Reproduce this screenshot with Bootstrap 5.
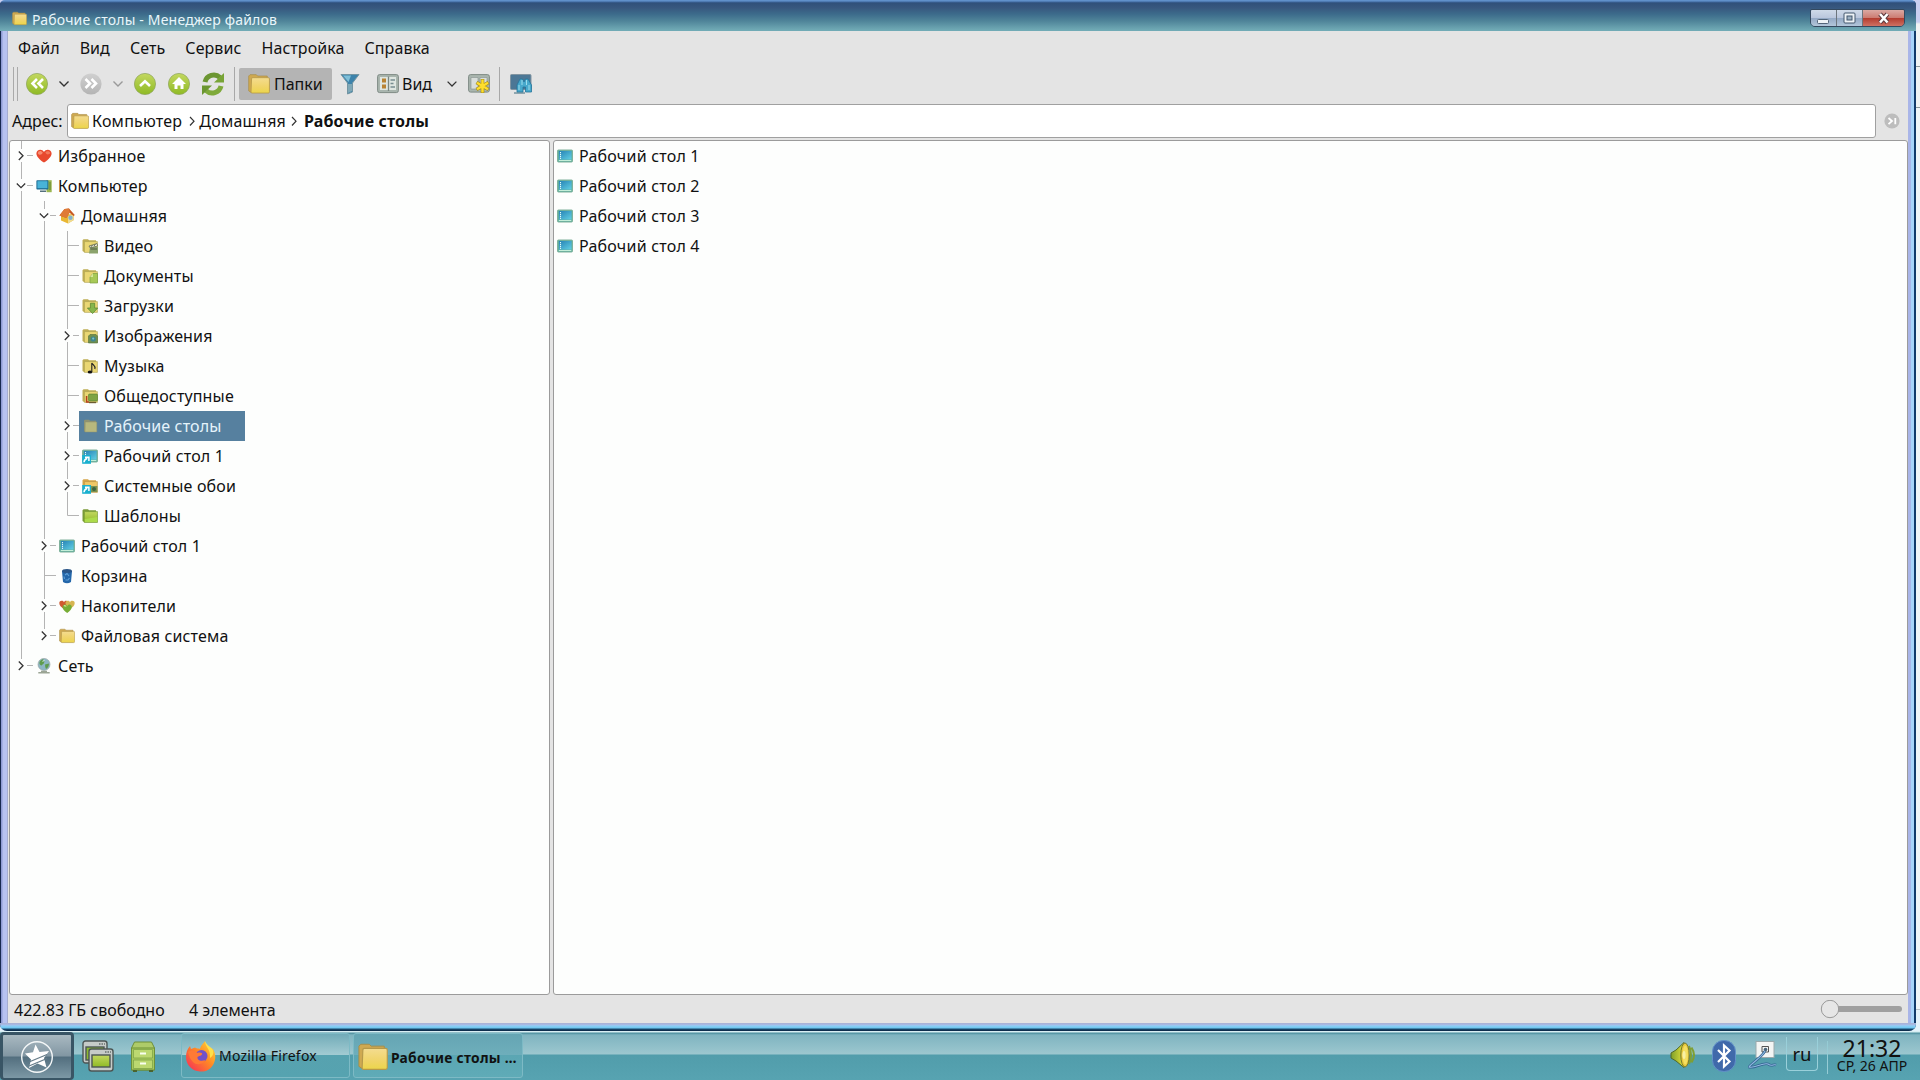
<!DOCTYPE html>
<html lang="ru">
<head>
<meta charset="utf-8">
<title>Менеджер файлов</title>
<link href="https://cdn.jsdelivr.net/npm/bootstrap@5.3.0/dist/css/bootstrap.min.css" rel="stylesheet">
<style>
html,body{height:100%}
body{width:1920px;height:1080px;overflow:hidden;background:linear-gradient(#c9cff0 0 22px,#f0f3f4 24px 66px,#8d979c 66px 67px,#f0f3f4 67px 107px,#8d979c 107px 108px,#f0f5f8 108px 1009px,#b9c2c8 1009px 1010px,#e4f2fb 1010px);font-family:"Noto Sans",sans-serif;font-size:16px;line-height:20px;color:#111}
svg{display:block;flex:none}
.win{width:1916px;height:1031px;border-radius:5px 5px 7px 7px;background:linear-gradient(90deg,#17284f 0 1px,#8f9cd4 1px 2px,#b7c2f0 3px 7px,#a5add0 7px 8px,transparent 8px 1908px,#a9b5e8 1908px 1911px,#a8d4fa 1911px 1914px,#123a6b 1914px);position:relative;z-index:1;overflow:hidden}
.titlebar{height:31px;background:linear-gradient(#6090ca 0 1px,#3d659b 2px,#30507a 3px,#38587f 8px,#3c6b8b 14px,#4f8499 21px,#70aab5 30px);color:#e9f6fb;font-size:14px;letter-spacing:.18px;padding:2px 11px 0 12px}
.winbody{margin:0 8px;width:1900px;height:992px;background:#e4e4e4}
.winfoot{height:8px;background:linear-gradient(#a9b3d8 0 1px,#a5c0ee 2px,#8bcff5 3px,#6ec6f0 5px,#1a4c72 6px,#0a2440 8px)}
.menurow{height:34px;padding:0 10px;gap:20px;letter-spacing:.08px}
.toolrow{height:37px;padding-left:5px}
.addrrow{height:37px;padding-left:4px}
.handle{width:5px;height:34px;border-left:1px solid #aaa;border-right:1px solid #aaa}
.vsep{width:1px;height:34px;background:#a8a8a8}
.tbtn{height:32px;width:93px;background:#b4b4b4;border-radius:2px;padding-left:9px;gap:4px}
.addr{width:1809px;height:34px;background:#fff;border:1px solid #a0a0a0;border-radius:3px;padding-left:3px;letter-spacing:.22px}
.addr b{letter-spacing:.14px}
.panes{padding:1px 0 0 1px}
.pane{background:#fdfefd;border:1px solid #9b9b9b;border-radius:3px;height:855px}
.lpane{width:541px}.rpane{width:1355px}
.trow{height:30px;letter-spacing:.15px}
.tlabel{height:30px;padding:0 0 0 3px;gap:6px;white-space:nowrap}
.tsel{background:#56809f;color:#e4f3fb;width:166px}
.frow{height:30px;padding-left:3px;gap:6px;letter-spacing:.2px}
.wbtns{width:95px;height:18px;margin-top:2px;border:1px solid #34495f;border-radius:2px 2px 5px 5px;overflow:hidden}
.wb{height:16px;background:linear-gradient(#cfdae8,#b9c6dc 50%,#93a8c4 50%,#b3c6da)}
.wclose{background:linear-gradient(#dba9a3,#cc7a70 50%,#b23a2d 50%,#cf7163)}
.taskbar{height:49px;width:1920px;background:linear-gradient(#d8eef3 0 1px,#4b8f9d 2px,#7fb4c0 4px,#9cc7cf 23px,#519dab 24px,#57a3b1 48px)}
.startbtn{width:74px;height:48px;margin-top:1px;border:3px solid #395565;border-bottom-width:2px;border-radius:4px;background:linear-gradient(#a9b9c1,#8297a3 48%,#536f7f 52%,#7c98a5)}
.task{height:45px;border:1px solid #7dbac5;border-radius:3px;white-space:nowrap}
.task1{width:169px;padding-left:3px;gap:3px;font-size:14px;letter-spacing:.22px;background:linear-gradient(#71abb8,#a2cbd2 48%,#57a2af 50%,#56a3b0)}
.task2{width:170px;padding:2px 0 0 4px;gap:3px;font-size:13.8px;font-weight:700;letter-spacing:.28px;background:linear-gradient(#65a5b3,#6eaebb 48%,#5ba6b3 50%,#5fabb7)}
.lang{width:32px;height:34px;border:1px solid #9ad0da;border-top:0;border-radius:0 0 4px 4px;font-size:18.500px;line-height:33px;text-align:center}
.clk{width:86px;text-align:center;line-height:1;white-space:nowrap}
.clk1{font-size:23px;line-height:24px}.clk2{font-size:14px;line-height:12px}
</style>
<script src="https://cdn.jsdelivr.net/npm/bootstrap@5.3.0/dist/js/bootstrap.bundle.min.js"></script>
</head>
<body>
<svg width="0" height="0" style="position:absolute">
<defs>
<linearGradient id="yel" x2="0" y2="1"><stop offset="0" stop-color="#f4dc90"/><stop offset=".6" stop-color="#f0d468"/><stop offset="1" stop-color="#ecd64a"/></linearGradient>
<linearGradient id="grn" x2="0" y2="1"><stop offset="0" stop-color="#c3d860"/><stop offset="1" stop-color="#8fba24"/></linearGradient>
<linearGradient id="gry" x2="0" y2="1"><stop offset="0" stop-color="#d0d0d0"/><stop offset="1" stop-color="#b4b4b4"/></linearGradient>
<linearGradient id="blu" x2="1" y2="1"><stop offset="0" stop-color="#2580b4"/><stop offset="1" stop-color="#62d0e4"/></linearGradient>
<linearGradient id="fx" x1="1" x2="0" y2="1"><stop offset="0" stop-color="#ffe23c"/><stop offset=".45" stop-color="#ff8a24"/><stop offset="1" stop-color="#f5265e"/></linearGradient>
<linearGradient id="spk"><stop offset="0" stop-color="#7fa02a"/><stop offset="1" stop-color="#e2e23c"/></linearGradient>
<symbol id="folder" viewBox="0 0 16 16"><path d="M.5 2.2 1.5 1.2H6L7 2.2H14V14H2L.5 13Z" fill="#cfa951" stroke="#a98d45" stroke-width=".5"/><path d="M2.6 4.2Q2.6 3.4 3.4 3.4H14.8Q15.6 3.4 15.6 4.2V13.6Q15.6 14.6 14.8 14.6H2.9Q2.2 14.6 2.2 13.8Z" fill="url(#yel)" stroke="#b6994a" stroke-width=".6"/></symbol>
<symbol id="fback" viewBox="0 0 16 16"><path d="M.5 2.2 1.5 1.2H6L7 2.2H14V14H2L.5 13Z" fill="#bfae55"/><path d="M2.4 3.6H15.4V14.4H2.4Z" fill="#ead774" stroke="#a99d50" stroke-width=".6"/></symbol>
<symbol id="video" viewBox="0 0 16 16"><use href="#fback"/><path d="M8 9H16V15.5H7Z" fill="#8ba36c"/><path d="M7 8 15 5.5 15.8 8 8 9.8Z" fill="#ecefdc" stroke="#555c44" stroke-width=".7"/><path d="M9 8.8 10.5 7M12 8 13.4 6M8.5 11H15" stroke="#4c523c" stroke-width=".9"/></symbol>
<symbol id="docs" viewBox="0 0 16 16"><use href="#fback"/><path d="M11 5.5H15.6V15H8V9Z" fill="#a7c957" stroke="#7b9d42" stroke-width=".7"/><path d="M11 5.5V9H8Z" fill="#d7e79c"/></symbol>
<symbol id="down" viewBox="0 0 16 16"><use href="#fback"/><path d="M8.4 5.2H12.7V10H15.7L10.6 15.6 5.4 10H8.4Z" fill="#86b64c" stroke="#55822c" stroke-width=".7"/></symbol>
<symbol id="pics" viewBox="0 0 16 16"><use href="#fback"/><path d="M6.5 8 8 6.5H14L15.5 8V15H6.5Z" fill="#6f8f51" stroke="#526f3a" stroke-width=".6"/><circle cx="11.2" cy="11" r="2.6" fill="#3d8590"/><circle cx="11.2" cy="10.6" r="1.1" fill="#7ec4bf"/></symbol>
<symbol id="music" viewBox="0 0 16 16"><use href="#fback"/><ellipse cx="8" cy="14" rx="2.3" ry="1.6" fill="#111"/><path d="M9.8 14V5C11 7.5 14 7.5 12.8 11" fill="none" stroke="#222" stroke-width="1.1"/></symbol>
<symbol id="public" viewBox="0 0 16 16"><use href="#fback"/><path d="M4.6 8V14H7" stroke="#b5411d" stroke-width="1.5" fill="none"/><rect x="6.500" y="6" width="9" height="7" rx="1" fill="#7da343" stroke="#587d2d" stroke-width=".6"/><path d="M7 14.500H14" stroke="#6b5b30" stroke-width="1.4"/></symbol>
<symbol id="fsel" viewBox="0 0 16 16"><path d="M2 2.5 3 1.8H7L8 2.8H14V14H3L2 13Z" fill="#8f9371"/><path d="M3.2 4H14.8V14H3Z" fill="#b8b87d" stroke="#8d9270" stroke-width=".5"/></symbol>
<symbol id="tmpl" viewBox="0 0 16 16"><path d="M.5 2.2 1.5 1.2H6L7 2.2H14V14H2L.5 13Z" fill="#7b9b38"/><path d="M2.4 3.6H15.5V14.4H2.2Z" fill="url(#grn)" stroke="#6f9430" stroke-width=".6"/><path d="M2.8 11 15.2 9V14H2.8Z" fill="#acdb4a"/></symbol>
<symbol id="desk" viewBox="0 0 16 16"><rect x=".5" y="2" width="15" height="12" rx=".8" fill="#5fae9f" stroke="#80b29c"/><rect x="2" y="3" width="12.500" height="8.600" fill="url(#blu)"/><path d="M3.500 4V11" stroke="#e3faf8" stroke-width="1.100" stroke-dasharray="1.200 .8"/><path d="M1.800 12.500H14.300" stroke="#c4eed8" stroke-width="1"/></symbol>
<symbol id="lnk" viewBox="0 0 16 16"><rect x=".2" y="7" width="8.8" height="8.8" fill="#1ab0cf"/><path d="M2 14.3Q2 11.5 5.3 10.2M3 9.3H6.9V13" fill="none" stroke="#fff" stroke-width="1.5"/></symbol>
<symbol id="desklnk" viewBox="0 0 16 16"><use href="#desk"/><use href="#lnk"/></symbol>
<symbol id="wall" viewBox="0 0 16 16"><path d="M.5 2.2 1.5 1.2H6L7 2.2H14V14H2L.5 13Z" fill="#d5a54a"/><path d="M2.4 3.6H15.4V14.4H2.4Z" fill="#f0c766" stroke="#b58f42" stroke-width=".6"/><rect x="8" y="8" width="7.4" height="6" fill="#7c9250"/><circle cx="12" cy="11" r="2" fill="#3b6340"/><use href="#lnk"/></symbol>
<symbol id="heart" viewBox="0 0 16 16"><path d="M8 14.6C3 11 .4 8.2.4 5.4.4 1.4 6 .2 8 4 10 .2 15.6 1.4 15.6 5.4 15.6 8.2 13 11 8 14.6Z" fill="#e8492e"/><path d="M1.8 5.2C2 2.6 5.4 2.2 6.8 4.8 5.6 7 3 7.5 1.8 5.2Z" fill="#f78c72"/><path d="M9.3 4.6C10.4 2.6 13.6 2.6 14.3 5 12.8 7 10.6 7 9.3 4.6Z" fill="#f27a5c"/></symbol>
<symbol id="comp" viewBox="0 0 16 16"><rect x="10.5" y="2.2" width="5.2" height="12" fill="#9ab650"/><path d="M14 4V12" stroke="#5f8331"/><rect x=".4" y="2.2" width="12" height="9.3" rx=".8" fill="#1c6a92"/><rect x="1.4" y="3.2" width="10" height="7" fill="#48b3d8"/><path d="M4 12.5H10V14H4Z" fill="#54707d"/></symbol>
<symbol id="home" viewBox="0 0 16 16"><path d="M2 7V12.5L9 15.6 14.8 12V6Z" fill="#e9b733"/><path d="M9 8.5 14.8 6V12L9 15.6Z" fill="#efdc91"/><path d="M.4 7.5 5.5 1 10 .6 15.8 7 14.6 8 10.5 4.8 7.4 10Z" fill="#c85a24"/><path d="M5.5 1 10 .6 10.8 4.2 7.4 10 .4 7.5Z" fill="#df7b36"/><circle cx="11.5" cy="9.8" r="2.2" fill="#83b2cc"/></symbol>
<symbol id="bin" viewBox="0 0 16 16"><path d="M3 3 4 14Q8 16.5 12 14L13 3Z" fill="#2467aa"/><ellipse cx="8" cy="3" rx="5" ry="2" fill="#2a5587"/><path d="M6 7 8 5.5 10 8M10.5 10 9 12H6.5M5.5 11 5 8.5" fill="none" stroke="#5f9fd6" stroke-width="1.2"/></symbol>
<symbol id="drives" viewBox="0 0 16 16"><path d="M5 11C2 9 .3 7.5.3 5 .3 2.500 4 2 5 4.300 6 2 9.500 2.500 9.500 5 9.500 7.500 8 9 5 11Z" fill="#cf5a30"/><path d="M11 11C8 9 6.500 7.500 6.500 5 6.500 2.500 10 2 11 4.300 12 2 15.700 2.500 15.700 5 15.700 7.500 14 9 11 11Z" fill="#d6b552"/><path d="M8.200 15C5.200 13 3.500 11 3.500 9 3.500 6.200 7.200 5.600 8.200 8.200 9.200 5.600 12.800 6.200 12.800 9 12.800 11 11 13 8.200 15Z" fill="#77ad35"/><path d="M5 8.200Q6 7 7.200 8.500" stroke="#cfe8a2" stroke-width="1.100" fill="none"/></symbol>
<symbol id="net" viewBox="0 0 16 16"><circle cx="8" cy="6.4" r="6" fill="#8db6c4" stroke="#9aa8a8" stroke-width=".7"/><path d="M3.5 4Q6 0 8 2 9 5 6.5 6.5 5 8.5 3.5 6ZM9 6.5 13 5.5Q13 9 10 11Q9 9 9 6.5Z" fill="#5f9c4e"/><path d="M6.5 3.3 8.5 2.4" stroke="#e6f4f8"/><path d="M5 13.4H11M2.3 14.8H13.7" stroke="#9ba595" stroke-width="1.5"/></symbol>
<symbol id="chr" viewBox="0 0 10 12"><path d="M3 2 7 6.200 3 10.500" fill="none" stroke="#333" stroke-width="1.200"/></symbol>
<symbol id="chd" viewBox="0 0 12 10"><path d="M1.6 2.6 6 7 10.4 2.6" fill="none" stroke="currentColor" stroke-width="1.3"/></symbol>
</defs></svg>

<div class="d-flex flex-column">
<div class="win">
  <div class="titlebar d-flex align-items-center">
    <svg width="15" height="15" style="margin-top:3px"><use href="#folder"/></svg>
    <span class="flex-grow-1" style="margin-left:5px;padding-top:6px">Рабочие столы - Менеджер файлов</span>
    <div class="wbtns d-flex">
      <svg class="wb" width="25" height="16"><rect x="6.500" y="9.500" width="11" height="4" rx="1" fill="#edf2f6" stroke="#526479"/></svg>
      <svg class="wb border-start border-secondary" width="26" height="16"><rect x="7" y="3" width="11" height="10" rx="1" fill="#edf2f6" stroke="#42566d"/><rect x="10" y="6" width="5" height="4" fill="#9cb0c2" stroke="#42566d"/></svg>
      <svg class="wb wclose border-start border-secondary" width="42" height="16"><path d="M17 4 24.500 12.500M24.500 4 17 12.500" stroke="#5c3a3e" stroke-width="4.600"/><path d="M17 4 24.500 12.500M24.500 4 17 12.500" stroke="#fff" stroke-width="2.600"/></svg>
    </div>
  </div>
  <div class="winbody d-flex flex-column">
    <div class="menurow d-flex align-items-center"><span>Файл</span><span>Вид</span><span>Сеть</span><span>Сервис</span><span>Настройка</span><span>Справка</span></div>
    <div class="toolrow d-flex align-items-center">
      <div class="handle"></div>
      <svg width="216" height="36"><g stroke="#8da45a" stroke-width=".7"><circle cx="19" cy="18" r="10.6" fill="url(#grn)"/><circle cx="127" cy="18" r="10.6" fill="url(#grn)"/><circle cx="161" cy="18" r="10.6" fill="url(#grn)"/></g><circle cx="73" cy="18" r="10.6" fill="url(#gry)"/>
        <g fill="none" stroke="#fff" stroke-width="2.6"><path d="M19 13 14.5 17.5 19 22M25 13 20.5 17.5 25 22"/><path d="M67.500 13 72 17.500 67.500 22M73.500 13 78 17.500 73.500 22"/><path d="M122 20 127 15.200 132 20"/></g>
        <path d="M161 11 168 18H165.500V23H162.500V19.500H159.500V23H156.500V18H154Z" fill="#fff"/>
        <path d="M41.500 15.500 46 20 50.500 15.500" fill="none" stroke="#333" stroke-width="1.4"/><path d="M95.500 15.500 100 20 104.500 15.500" fill="none" stroke="#999" stroke-width="1.400"/>
        <path d="M187 16A9 9 0 0 1 202 11.500" fill="none" stroke="#6c9632" stroke-width="5"/><path d="M196 16.500H206V7Z" fill="#78a436"/><path d="M203 20A9 9 0 0 1 188 24.500" fill="none" stroke="#7faa3a" stroke-width="5"/><path d="M194 19.500H184V29Z" fill="#6b9630"/></svg>
      <div class="vsep"></div>
      <div class="tbtn d-flex align-items-center ms-1"><svg width="22" height="22"><use href="#folder"/></svg><span>Папки</span></div>
      <svg class="ms-2" width="20" height="22"><path d="M1 1.500H19L12.500 10V19L7.500 21V10Z" fill="#3d83ab" stroke="#7395a2"/><path d="M3 2.500H11L8.500 9Z" fill="#7fbfd8"/><path d="M8 11H12V18L8 20Z" fill="#7fa8b7"/></svg>
      <svg width="22" height="22" style="margin-left:17px"><rect x=".6" y="1.600" width="20.800" height="18" rx="2" fill="#a9b5ae" stroke="#7f8b85"/><rect x="3" y="4" width="16" height="13" fill="#dfe6e1"/><path d="M11.500 3.500V18" stroke="#7a8781" stroke-width="1.300"/><path d="M5 5.500H9V9.500H5ZM5 11.500H9V15.500H5Z" fill="#b98334"/><path d="M13.500 7H18M13.500 10.500H16.500M13.500 14H18" stroke="#788d91" stroke-width="1.300"/></svg>
      <span style="margin-left:3px">Вид</span>
      <svg width="12" height="10" style="margin-left:14px;color:#333"><use href="#chd"/></svg>
      <svg width="24" height="24" style="margin-left:10px"><rect x=".6" y="2.600" width="20.800" height="17.500" rx="2" fill="#a9b5ae" stroke="#7f8b85"/><path d="M3 5.500H10V17H3ZM12 5.500H19V17H12Z" fill="#d9dedb" stroke="#87928d" stroke-width=".6"/><path d="M14.500 7V21M8.500 10.500 20.500 17.500M20.500 10.500 8.500 17.500" stroke="#a38b18" stroke-width="3.600"/><path d="M14.500 7.600V20.400M9 10.800 20 17.200M20 10.800 9 17.200" stroke="#ffdf2c" stroke-width="2.400"/></svg>
      <div class="vsep" style="margin-left:7px"></div>
      <svg width="23" height="24" style="margin-left:10px"><rect x=".5" y="2.500" width="20.500" height="15" rx="1" fill="#4c7795" stroke="#8194a0"/><path d="M4 20H15V22H4Z" fill="#8ea6b0"/><path d="M7 20V13L10 7H12.500L14 10 15.500 7H18L21.500 13V20H15.500V15H13V20Z" fill="#48a9cc" stroke="#25739b" stroke-width=".8"/><path d="M9 13V18M19 13V18M12 8V13M16.500 8V13" stroke="#9dddec" stroke-width="1"/></svg>
    </div>
    <div class="addrrow d-flex align-items-center">
      <span style="width:55px">Адрес:</span>
      <div class="addr d-flex align-items-center"><svg width="18" height="18"><use href="#folder"/></svg><span style="margin-left:3px">Компьютер</span><svg width="10" height="12" style="margin:0 2px 0 5px"><use href="#chr"/></svg><span>Домашняя</span><svg width="10" height="12" style="margin:0 5px 0 3px"><use href="#chr"/></svg><b>Рабочие столы</b></div>
      <svg width="16" height="16" style="margin-left:8px"><circle cx="8" cy="8" r="7.600" fill="#bdbdbd"/><path d="M4.500 5 8 8 4.500 11.200M11.300 5V11.200" fill="none" stroke="#fff" stroke-width="1.800"/></svg>
    </div>
    <div class="panes d-flex justify-content-between">
      <div class="pane lpane" id="tree"></div>
      <div class="pane rpane" id="files"></div>
    </div>
    <div class="d-flex align-items-center flex-grow-1" style="padding:2px 4px 0 6px">
      <span style="width:175px">422.83 ГБ свободно</span><span class="flex-grow-1">4 элемента</span>
      <svg width="84" height="20"><rect x="14" y="6" width="68" height="6" rx="3" fill="#a0a0a0"/><circle cx="10" cy="9" r="8.700" fill="#e6e6e6" stroke="#999"/></svg>
    </div>
  </div>
  <div class="winfoot"></div>
</div>

<div class="taskbar d-flex align-items-start">
  <div class="startbtn d-flex justify-content-center align-items-center">
    <svg width="34" height="34"><circle cx="17" cy="17" r="15.300" fill="none" stroke="#f4f7f8" stroke-width="1.400"/><path d="M15.500 4.500 19.500 12 29 11 24 18 26.500 27.500 17.500 23.500 9 28 11 19.500 5 13.500 13 12.300Z" fill="#fff"/><path d="M9 22 27 14.500M9 26 27 18.500" stroke="#647b88" stroke-width="1.300"/></svg>
  </div>
  <svg width="32" height="33" style="margin:9px 0 0 8px"><g stroke="#4c5655" stroke-width="1.400"><rect x="1" y="1" width="24" height="22" rx="2.500" fill="#c6cbc8"/><rect x="4" y="7" width="18" height="13" fill="#8dba30"/><rect x="7" y="9" width="24" height="22" rx="2.500" fill="#c6cbc8"/><rect x="10" y="15" width="18" height="12" fill="url(#grn)"/></g><path d="M17 4H23M23 12H29" stroke="#68716e" stroke-width="1.500" stroke-dasharray="1.500 1"/></svg>
  <svg width="26" height="32" style="margin:10px 0 0 16px"><path d="M1.500 7 4.500 1H21.500L24.500 7V29H1.500Z" fill="#aecb69" stroke="#6d8f39"/><path d="M1.500 7H24.500V29H1.500Z" fill="#a7c95c" stroke="#6d8f39"/><path d="M3.500 8.500H22.500V17H3.500ZM3.500 19H22.500V27.500H3.500Z" fill="#bcd870" stroke="#82a548" stroke-width=".8"/><path d="M10 12.500H16M10 22.500H16" stroke="#fafff0" stroke-width="2"/><path d="M3 30H7M19 30H23" stroke="#4b642e" stroke-width="2"/></svg>
  <div class="task task1 d-flex align-items-center" style="margin:2px 0 0 25px">
    <svg width="31" height="32"><path d="M20 1C20 4 23 5 25 8L28 9C31 14 31 20 28 25 25 30 20 32 15 31.500 7 31 1 25 1 17 1 13 2 9 5 6L6 9 10 7.500C12 9 14 8 15 9 16 5 18 4 20 1Z" fill="url(#fx)"/><ellipse cx="16.500" cy="16" rx="6" ry="6" fill="#7350c8"/><path d="M3 12C7 9 11 11 12 13 15 12 18 13 17 14.500 16 16 13 16 12.500 17 12 20 16 22 20 20 19 24 12 26 8 22 5 19 4 16 3 12Z" fill="#ff7a35"/><path d="M20 1C20 7 26 9 25 18 30 15 29 9 25 7 22 5 21 3 20 1Z" fill="#ffe04a"/></svg>
    <span>Mozilla Firefox</span>
  </div>
  <div class="task task2 d-flex align-items-center" style="margin:2px 0 0 3px"><svg width="30" height="30"><use href="#folder"/></svg><span style="padding-top:2px">Рабочие столы …</span></div>
  <div class="ms-auto d-flex align-items-start">
    <svg width="26" height="28" style="margin-top:10px"><path d="M19 5Q23 14 19 23M21.500 6.500Q26.500 14 21.500 21.500" fill="none" stroke="#7f9f34" stroke-width="2"/><path d="M1 12 6 9 14 1.500V26.500L6 20 1 17Z" fill="url(#spk)" stroke="#52682b"/><ellipse cx="15" cy="14" rx="4.200" ry="12" fill="#e9c93c" stroke="#77792f"/><ellipse cx="15.300" cy="14" rx="2.600" ry="9.500" fill="#f5df62"/><ellipse cx="14" cy="14" rx="1.600" ry="4" fill="#f9f0a4"/></svg>
    <svg width="24" height="32" style="margin:9px 0 0 16px"><rect x=".5" y=".5" width="23" height="31" rx="11" fill="#4069aa" stroke="#6291c9"/><path d="M6 10 17.500 21.500 12 26.500V5.500L17.500 10.500 6 22" fill="none" stroke="#fff" stroke-width="2.200"/></svg>
    <svg width="30" height="32" style="margin:9px 0 0 12px"><rect x="8" y="1.500" width="18" height="16" fill="#f3f5f4" stroke="#9aa9ac"/><path d="M14 12V6.500H20.500V12Z" fill="none" stroke="#555"/><circle cx="17.500" cy="9.500" r="1.800" fill="#49657a"/><path d="M17 11C14 17 5 22 1 27 6 29 15 22 20 24 24 27 25 24 28 25" fill="none" stroke="#315f91" stroke-width="2.600"/><path d="M17 11C14 17 5 22 1 27 6 29 15 22 20 24 24 27 25 24 28 25" fill="none" stroke="#91bce0" stroke-width="1.100"/></svg>
    <div class="lang" style="margin:6px 0 0 8px">ru</div>
    <div style="width:1px;height:33px;margin:10px 1px 0 9px;background:#96ccd5"></div>
    <div class="clk" style="margin-top:5px"><div class="clk1">21:32</div><div class="clk2">СР, 26 АПР</div></div>
    <div style="width:5px"></div>
  </div>
</div>
</div>
<script>
// Guide cells: "|" line through, "r"/"d" collapsed/expanded, "t" tee, "l" corner; "_" drops the lower line
const rows=[["r","heart","Избранное"],["d","comp","Компьютер"],["| d","home","Домашняя"],
["| | t","video","Видео"],["| | t","docs","Документы"],["| | t","down","Загрузки"],["| | r","pics","Изображения"],["| | t","music","Музыка"],["| | t","public","Общедоступные"],["| | r","fsel","Рабочие столы"],["| | r","desklnk","Рабочий стол 1"],["| | r","wall","Системные обои"],["| | l","tmpl","Шаблоны"],
["| r","desk","Рабочий стол 1"],["| t","bin","Корзина"],["| r","drives","Накопители"],["| r_","folder","Файловая система"],["r_","net","Сеть"]];
function cell(c){
  const k=c[0],end=c[1]==="_";let p="";
  if(k==="|")p="M11.500 0V30";
  if(k==="t")p="M11.500 0V30M11.500 14.500H23";
  if(k==="l")p="M11.500 0V14.500H23";
  if(k==="r"||k==="d")p="M11.500 0V8"+(end?"":"M11.500 "+(k==="r"?21:20)+"V30")+"M17 14.500H23";
  const a=k==="r"?'<path d="M8.800 10.500 13 14.700 8.800 19" fill="none" stroke="#333" stroke-width="1.300"/>':k==="d"?'<path d="M6.800 12.500 11 16.700 15.200 12.500" fill="none" stroke="#333" stroke-width="1.300"/>':"";
  return `<svg width="23" height="30"><path d="${p}" fill="none" stroke="#b4b4b4"/>${a}</svg>`;
}
const ic=n=>`<svg width="16" height="16"><use href="#${n}"/></svg>`;
document.getElementById("tree").innerHTML=rows.map(([g,i,t])=>`<div class="trow d-flex">${g.split(" ").map(cell).join("")}<div class="tlabel d-flex align-items-center${i==="fsel"?" tsel":""}">${ic(i)}<span>${t}</span></div></div>`).join("");
document.getElementById("files").innerHTML=[1,2,3,4].map(n=>`<div class="frow d-flex align-items-center">${ic("desk")}<span>Рабочий стол ${n}</span></div>`).join("");
</script>
</body>
</html>
